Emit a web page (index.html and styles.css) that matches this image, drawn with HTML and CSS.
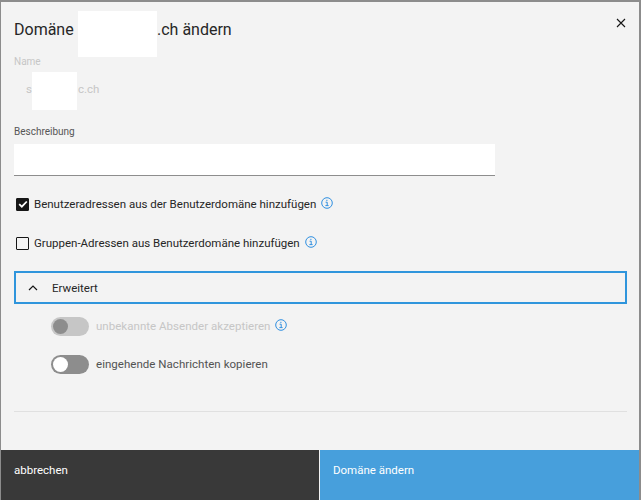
FILE: index.html
```html
<!DOCTYPE html>
<html>
<head>
    <title>Domäne ändern</title>
    <link rel="stylesheet" href="styles.css">
</head>
<body>
    <div class="modal">
        <div class="redact redact-title"></div>
        <div class="redact redact-name"></div>

        <div class="content">
            <div class="header">
                <h2 class="title"><span class="title-start">Domäne</span><span>.ch ändern</span></h2>
                <svg class="close" width="16" height="16" viewBox="0 0 16 16">
                    <path d="M4 4l8 8M12 4l-8 8" stroke="#161616" stroke-width="1.1" fill="none"/>
                </svg>
            </div>

            <div class="label label-disabled">Name</div>
            <div class="name-value"><span>s</span><span class="name-gap"></span><span>c.ch</span></div>

            <div class="label">Beschreibung</div>
            <div class="text-input"></div>

            <div class="check-row check-first">
                <span class="checkbox checked">
                    <svg width="10" height="10" viewBox="0 0 10 10"><path d="M1.2 5.2l2.6 2.5 5-5.2" stroke="#fff" stroke-width="1.8" fill="none"/></svg>
                </span>
                <span>Benutzeradressen aus der Benutzerdomäne hinzufügen</span>
                <svg class="info" width="12" height="12" viewBox="0 0 12 12"><circle cx="6" cy="6" r="5.3"/><path d="M4.6 5.2h1.6v3M4.4 8.6h3.2M5.9 2.8v1.2"/></svg>
            </div>
            <div class="check-row check-second">
                <span class="checkbox"></span>
                <span>Gruppen-Adressen aus Benutzerdomäne hinzufügen</span>
                <svg class="info" width="12" height="12" viewBox="0 0 12 12"><circle cx="6" cy="6" r="5.3"/><path d="M4.6 5.2h1.6v3M4.4 8.6h3.2M5.9 2.8v1.2"/></svg>
            </div>

            <div class="accordion">
                <svg width="10" height="6" viewBox="0 0 10 6"><path d="M1 5l4-4 4 4" stroke="#161616" stroke-width="1.2" fill="none"/></svg>
                <span>Erweitert</span>
            </div>

            <div class="toggle-row toggle-first toggle-disabled">
                <span class="toggle"><span class="knob"></span></span>
                <span>unbekannte Absender akzeptieren</span>
                <svg class="info" width="12" height="12" viewBox="0 0 12 12"><circle cx="6" cy="6" r="5.3"/><path d="M4.6 5.2h1.6v3M4.4 8.6h3.2M5.9 2.8v1.2"/></svg>
            </div>
            <div class="toggle-row toggle-second">
                <span class="toggle"><span class="knob"></span></span>
                <span>eingehende Nachrichten kopieren</span>
            </div>

            <div class="divider"></div>
        </div>

        <div class="footer">
            <div class="btn btn-cancel">abbrechen</div>
            <div class="btn btn-save">Domäne ändern</div>
        </div>
    </div>
</body>
</html>
```

FILE: styles.css
```css
* {
    box-sizing: border-box;
}

html, body {
    height: 100%;
}

body {
    margin: 0;
    background-color: #8c8c8c;
    padding: 2px 2px 0 1px;
    font-family: Roboto, sans-serif;
    color: #262626;
    overflow: hidden;
}

.modal {
    position: relative;
    height: 498px;
    background-color: #f3f3f3;
    display: flex;
    flex-direction: column;
}

/* white blocks hiding the domain name */
.redact {
    position: absolute;
    background-color: #fff;
}

.redact-title {
    left: 77px;
    top: 9px;
    width: 79px;
    height: 46px;
}

.redact-name {
    left: 31px;
    top: 70px;
    width: 45px;
    height: 38px;
}

.content {
    flex: 1;
    padding: 0 12px 0 13px;
}

.header {
    display: flex;
    justify-content: space-between;
    height: 49px;
    padding-top: 17px;
}

.title {
    margin: 0;
    display: flex;
    font-size: 16px;
    font-weight: 400;
    line-height: 22px;
}

.title-start {
    width: 143px;
}

.close {
    margin: -4px -2px 0 0;
}

.label {
    font-size: 10px;
    line-height: 14px;
    color: #565656;
}

.label-disabled {
    margin-top: 4px;
    color: #c6c6c6;
}

.name-value {
    display: flex;
    margin-top: 12px;
    height: 16px;
    padding-left: 12px;
    font-size: 11.5px;
    line-height: 16px;
    color: #c6c6c6;
}

.name-gap {
    width: 46px;
}

.name-value + .label {
    margin-top: 28px;
}

.text-input {
    width: 481px;
    height: 32px;
    margin-top: 5px;
    background-color: #fff;
    border-bottom: 1px solid #8d8d8d;
}

.check-row {
    display: flex;
    align-items: center;
    gap: 5px;
    padding-left: 2px;
    font-size: 11.5px;
    line-height: 16px;
}

.check-first {
    margin-top: 20px;
}

.check-second {
    margin-top: 23px;
}

.checkbox {
    width: 13px;
    height: 13px;
    border: 1px solid #161616;
    border-radius: 1px;
    display: flex;
    align-items: center;
    justify-content: center;
}

.checkbox.checked {
    background-color: #161616;
}

.info {
    fill: none;
    stroke: #2f8fe0;
    stroke-width: 1;
    margin: -2px 0 0 0;
}

.accordion {
    display: flex;
    align-items: center;
    gap: 14px;
    height: 33px;
    margin-top: 20px;
    padding-left: 12px;
    border: 2px solid #2f95dc;
    font-size: 11.5px;
}

.toggle-row {
    display: flex;
    align-items: center;
    gap: 7px;
    padding-left: 37px;
    font-size: 11.5px;
    letter-spacing: 0.03px;
    line-height: 20px;
    color: #525252;
}

.toggle-row .info {
    margin-left: -3px;
}

.toggle-first {
    margin-top: 12px;
}

.toggle-second {
    margin-top: 18px;
}

.toggle-disabled {
    color: #c6c6c6;
}

.toggle {
    width: 38px;
    height: 19px;
    border-radius: 10px;
    background-color: #8d8d8d;
    display: flex;
    align-items: center;
    padding-left: 2px;
}

.knob {
    width: 15px;
    height: 15px;
    border-radius: 50%;
    background-color: #fff;
}

.toggle-disabled .toggle {
    background-color: #c6c6c6;
}

.toggle-disabled .knob {
    background-color: #8d8d8d;
}

.divider {
    height: 1px;
    margin-top: 37px;
    background-color: #e0e0e0;
}

.footer {
    display: flex;
    height: 50px;
    font-size: 11.5px;
    color: #fff;
}

.btn {
    padding: 12px 13px;
    line-height: 16px;
}

.btn-cancel {
    width: 318px;
    background-color: #393939;
}

.btn-save {
    flex: 1;
    margin-left: 1px;
    background-color: #479fdc;
}
```
